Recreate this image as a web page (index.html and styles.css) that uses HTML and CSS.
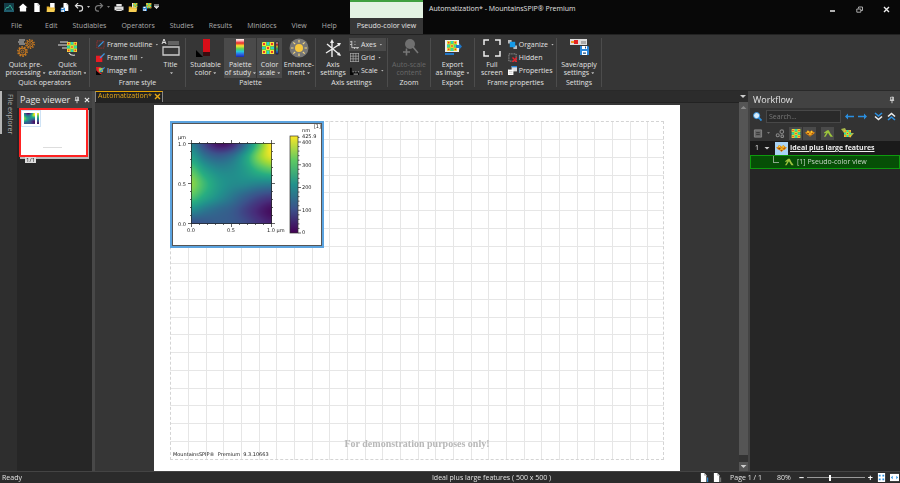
FILE: index.html
```html
<!DOCTYPE html>
<html lang="en">
<head>
<meta charset="utf-8">
<title>Automatization* - MountainsSPIP® Premium</title>
<link rel="stylesheet" href="styles.css">
</head>
<body>
<svg class="defs" aria-hidden="true">
  <defs>
    <linearGradient id="rainbow" x1="0" y1="0" x2="0" y2="1">
      <stop offset="0" stop-color="#fff"/><stop offset=".1" stop-color="#f9b3b3"/><stop offset=".22" stop-color="#e8262c"/><stop offset=".38" stop-color="#f7e431"/><stop offset=".55" stop-color="#55d255"/><stop offset=".7" stop-color="#27c4dc"/><stop offset=".85" stop-color="#2a63e8"/><stop offset="1" stop-color="#1a2ba8"/>
    </linearGradient>
    <linearGradient id="viridis" x1="0" y1="1" x2="0" y2="0">
      <stop offset="0" stop-color="#440154"/><stop offset=".25" stop-color="#3b528b"/><stop offset=".5" stop-color="#21918c"/><stop offset=".75" stop-color="#5ec962"/><stop offset="1" stop-color="#fde725"/>
    </linearGradient>
    <symbol id="map" viewBox="0 0 12 12">
      <rect width="12" height="12" fill="#5fd04a"/>
      <path d="M5 0h2v3H5zM0 5h3v2H0zM9 5h3v2H9zM5 9h2v3H5z" fill="#2fd0c8"/>
      <path d="M1 0h3v4H0V1zM8 0h4v4H8zM0 8h4v4H0zM8 8h4v4H8zM4 4h4v4H4z" fill="#f5e53b"/>
      <path d="M1 1h2v2H1zM9 1h2v2H9zM1 9h2v2H1zM9 9h2v2H9zM5 5h2v2H5z" fill="#ee3a28"/>
    </symbol>
    <symbol id="gear" viewBox="0 0 10 10">
      <circle cx="5" cy="5" r="4.2" fill="none" stroke="#c9791f" stroke-width="1.4" stroke-dasharray="1.4 1.2"/>
      <circle cx="5" cy="5" r="3.1" fill="none" stroke="#c9791f"/><circle cx="5" cy="5" r="1.4" fill="none" stroke="#c9791f" stroke-width=".8"/>
    </symbol>
    <symbol id="doc" viewBox="0 0 8 10"><path d="M1 0h4l2 2.500v7.500H1z" fill="#fff"/><path d="M5 0v2.500h2" fill="none" stroke="#888" stroke-width=".6"/></symbol>
    <symbol id="disk" viewBox="0 0 9 9"><path d="M0 0h8l1 1v8H0z" fill="#2a86d8"/><path d="M2 0h5v3H2zM2 5h5v4H2z" fill="#fff"/><path d="M5 .5h1v2H5zM3 6h3v.6H3zM3 7.300h3v.6H3z" fill="#1b4e86"/></symbol>
    <symbol id="folder" viewBox="0 0 10 10"><path d="M4 0h5v6H4z" fill="#fff"/><path d="M0 4h3l1 1h5v5H0z" fill="#e8b32c"/><path d="M1 6h9l-2 4H0z" fill="#f6ce54"/></symbol>
    <symbol id="surface" viewBox="0 0 12 10"><path d="M0 4l2-1 1-2 2 1 1 1 2-2 2 2 2 1-2 2-2 1-2 2-2-2-2-1z" fill="#dd8a14"/><path d="M3 2l1 0 1 2-2 0zM7 2l1 0 1 2-2 0zM5 5h2v2H5z" fill="#ffd83b"/><path d="M2 5l2-1 1 1-1 1zM8 5l2-1-1 2zM5 7l1-1 1 1-1 1z" fill="#94400e"/></symbol>
    <symbol id="peak" viewBox="0 0 12 10"><path d="M1 4l4-3h2l2 4 3 4H9L7 6 6 4 3 9H1l3-5-2 1z" fill="#9cc43c"/></symbol>
    <symbol id="pin" viewBox="0 0 7 8"><path d="M2 .5h3v3.500H2zM1 4.500h5M3.500 4.500V8" fill="none" stroke="#ddd"/><path d="M4 0h1v4H4z" fill="#ddd"/></symbol>
    <symbol id="cross" viewBox="0 0 7 7"><path d="M1 1l5 5M6 1l-5 5" fill="none" stroke="currentColor" stroke-width="1.400"/></symbol>
    <symbol id="arrow" viewBox="0 0 9 7"><path d="M0 3.500L3 .5v2.200H9v1.600H3v2.200z" fill="#2b8fe0"/></symbol>
  </defs>
</svg>
<div class="app">
  <header class="top">
    <div class="quick" role="toolbar" aria-label="Quick access">
      <svg class="logo" viewBox="0 0 10 9"><rect width="10" height="9" fill="#143e48"/><path d="M1 7l2-3 1 1 2-3 3 5" fill="none" stroke="#31a58e"/><path d="M0 8h10" stroke="#2c7a91"/></svg>
      <button aria-label="Home"><svg viewBox="0 0 10 10"><path d="M5 .5L10 5H8.500v4.500h-7V5H0z" fill="#fff"/></svg></button>
      <button aria-label="New"><svg viewBox="0 0 10 10"><use href="#doc" x="1" width="8" height="10"/></svg></button>
      <button aria-label="Open"><svg viewBox="0 0 10 10"><use href="#folder" width="10" height="10"/></svg></button>
      <button aria-label="Save"><svg viewBox="0 0 10 10"><use href="#doc" x="2" width="8" height="9"/><use href="#disk" x="0" y="5" width="5" height="5"/></svg></button>
      <button aria-label="Undo"><svg viewBox="0 0 10 10"><path d="M4 0L1 3l3 3M1.500 3H6a3 3 0 0 1 0 6H5" fill="none" stroke="#ddd" stroke-width="1.300"/></svg><i class="caret"></i></button>
      <button aria-label="Redo"><svg viewBox="0 0 10 10"><path d="M6 0l3 3-3 3M8.500 3H4a3 3 0 0 0 0 6h1" fill="none" stroke="#777" stroke-width="1.300"/></svg><i class="caret dim"></i></button>
      <button aria-label="Print"><svg viewBox="0 0 10 10"><path d="M2 1h6v3H2zM0 4h10v4H0zM2 7h6v2H2z" fill="#e4e4e4"/><path d="M1 4h8M2 7h6" stroke="#555" stroke-width=".7"/></svg></button>
      <button aria-label="Open studiable"><svg viewBox="0 0 10 10"><use href="#folder" width="10" height="10"/><use href="#map" x="5" width="5" height="5"/></svg></button>
      <button aria-label="Save studiable"><svg viewBox="0 0 10 10"><use href="#map" x="4" width="6" height="6"/><use href="#disk" y="4" width="5" height="5"/></svg></button>
      <button class="more" aria-label="Customize"><svg viewBox="0 0 6 6"><path d="M0 .5h6M0 2h6L3 5z" fill="#ddd" stroke="#ddd"/></svg></button>
    </div>
    <div class="context-band"></div>
    <div class="title-zone">
      <h1>Automatization* - MountainsSPIP® Premium</h1>
      <div class="window-buttons">
        <button aria-label="Minimize"><svg viewBox="0 0 7 7"><path d="M1 5h5" stroke="#ddd" stroke-width="1.600"/></svg></button>
        <button aria-label="Restore"><svg viewBox="0 0 7 7"><path d="M2.500 2.500V1h4v3.500H5M.8 3h4v3.200h-4z" fill="none" stroke="#aaa"/></svg></button>
        <button aria-label="Close"><svg viewBox="0 0 7 7"><use href="#cross" width="7" height="7"/></svg></button>
      </div>
    </div>
    <nav class="menu">
      <a href="#" class="file">File</a><a href="#">Edit</a><a href="#">Studiables</a><a href="#">Operators</a><a href="#">Studies</a><a href="#">Results</a><a href="#">Minidocs</a><a href="#">View</a><a href="#">Help</a>
    </nav>
    <a href="#" class="active-tab">Pseudo-color view</a>
  </header>

  <div class="ribbon">
    <section class="group g-quick">
      <div class="tools">
        <button class="big w41"><svg viewBox="0 0 20 20"><path d="M3 2h6M2 4h6M3 6h6" stroke="#999" stroke-width="1.300"/><use href="#gear" x="9" y="1" width="10" height="10"/><use href="#gear" x="1" y="8" width="11" height="11"/></svg><span>Quick pre-<br>processing<i class="caret"></i></span></button>
        <button class="big w41"><svg viewBox="0 0 20 20"><path d="M2 4h8M0 7h9M4 10h5M11 15q2 3 6 2" stroke="#ddd" fill="none" stroke-width="1.200"/><use href="#map" x="9" y="4" width="10" height="10"/></svg><span>Quick<br>extraction<i class="caret"></i></span></button>
      </div><h2>Quick operators</h2>
    </section>
    <section class="group g-style">
      <div class="tools">
        <div class="stack">
          <button><svg viewBox="0 0 10 10"><path d="M1 1h8v8H1z" fill="none" stroke="#c03030" stroke-dasharray="1 1"/><path d="M2 8l1-2 5-5 1 1-5 5z" fill="#3795e0"/></svg>Frame outline<i class="caret"></i></button>
          <button><svg viewBox="0 0 10 10"><path d="M0 3h7v7H0z" fill="#e81c24"/><path d="M4 5l5-5 1 1-5 5z" fill="#3795e0"/></svg>Frame fill<i class="caret"></i></button>
          <button><svg viewBox="0 0 10 10"><path d="M0 1h6L3 6l4 3H1z" fill="#e81c24"/><path d="M0 5v5h6z" fill="#080808"/><use href="#map" x="3" y="2" width="5" height="5"/><path d="M4 6l5-5 1 1-5 5z" fill="#3795e0"/></svg>Image fill<i class="caret"></i></button>
        </div>
        <button class="big w30"><svg viewBox="0 0 20 20"><path d="M7 4h11M7 6h11" stroke="#aaa" stroke-width=".8"/><path d="M2 9h16v8H2z" fill="none" stroke="#ccc" stroke-width="1.300"/><path d="M1 6l2-5 2 5M2 4.500h2" fill="none" stroke="#ddd" stroke-width="1"/></svg><span>Title<br><i class="caret"></i></span></button>
      </div><h2>Frame style</h2>
    </section>
    <section class="group g-palette">
      <div class="tools">
        <button class="big w36"><svg viewBox="0 0 20 20"><path d="M7 1h7v15H7z" fill="#d80d18"/><path d="M7 14h7v4H7z" fill="#3a0d10"/><path d="M0 12v7h7z" fill="#000"/></svg><span>Studiable<br>color<i class="caret"></i></span></button>
        <button class="big w33 on"><svg viewBox="0 0 20 20"><rect x="6" y="1" width="8" height="18" fill="url(#rainbow)"/></svg><span>Palette<br>of study<i class="caret"></i></span></button>
        <button class="big w25 on"><svg viewBox="0 0 20 20"><use href="#map" x="2" y="4" width="12" height="12"/><rect x="16" y="4" width="2" height="12" fill="url(#rainbow)" stroke="#111" stroke-width=".6"/></svg><span>Color<br>scale<i class="caret"></i></span></button>
        <button class="big w33"><svg viewBox="0 0 20 20"><circle cx="10" cy="10" r="9.500" fill="#777"/><circle cx="10" cy="10" r="4" fill="#f7c83d"/><path d="M10 2v2.500M10 15.500V18M2 10h2.500M15.500 10H18M4.300 4.300l1.900 1.900M13.800 13.800l1.900 1.900M4.300 15.700l1.900-1.900M13.800 6.200l1.900-1.900" stroke="#f3d67c" stroke-width="1.200"/></svg><span>Enhance-<br>ment<i class="caret"></i></span></button>
      </div><h2>Palette</h2>
    </section>
    <section class="group g-axis">
      <div class="tools">
        <button class="big w30"><svg viewBox="0 0 20 20"><path d="M9 19V3M3 15l14-9M4 6l13 11" fill="none" stroke="#eee" stroke-width="1.400"/><path d="M9 1l2 4H7zM18 5l-4 0 2 3.500zM18 18l-4-1 2-3z" fill="#eee"/></svg><span>Axis<br>settings</span></button>
        <div class="stack">
          <button class="on"><svg viewBox="0 0 10 10"><path d="M2 1v7.500h8M0 2h2M0 5h2M5 8v2M8 8v2M5 5h1M5 2h1" stroke="#ccc" fill="none"/></svg>Axes<i class="caret"></i></button>
          <button><svg viewBox="0 0 10 10"><path d="M.5 0v10M3.500 0v10M6.500 0v10M9.500 0v10M0 .5h10M0 3.500h10M0 6.500h10M0 9.500h10" stroke="#aaa" stroke-width=".8"/></svg>Grid<i class="caret"></i></button>
          <button><svg viewBox="0 0 10 10"><path d="M0 2h2v8H0zM2 7h8v3H2z" fill="#050505"/><path d="M3 6.500h1M6 6.500h1M9 6.500h1M4 9h5" stroke="#ccc"/></svg>Scale<i class="caret"></i></button>
        </div>
      </div><h2>Axis settings</h2>
    </section>
    <section class="group g-zoom">
      <div class="tools"><button class="big w41 off" disabled><svg viewBox="0 0 20 20"><circle cx="11" cy="6" r="5" fill="#707070"/><path d="M14 9l5 6M4 14h7M7.500 10.500v7" stroke="#777" stroke-width="1.600"/></svg><span>Auto-scale<br>content</span></button></div><h2>Zoom</h2>
    </section>
    <section class="group g-export">
      <div class="tools"><button class="big w41"><svg viewBox="0 0 20 20"><path d="M2 2h14v12H2z" fill="#eee"/><use href="#map" x="4" y="3" width="10" height="10"/><path d="M13 7h3V5l3 3.500-3 3.500v-2h-3z" fill="#2077c8"/><path d="M2 15h9v2H2z" fill="#2077c8"/></svg><span>Export<br>as image<i class="caret"></i></span></button></div><h2>Export</h2>
    </section>
    <section class="group g-frame">
      <div class="tools">
        <button class="big w30"><svg viewBox="0 0 20 20"><path d="M2 7V2h5M13 2h5v5M18 13v5h-5M7 18H2v-5" fill="none" stroke="#eee" stroke-width="1.500"/></svg><span>Full<br>screen</span></button>
        <div class="stack">
          <button><svg viewBox="0 0 10 10"><path d="M0 0h4v4H0zM6 6h4v4H6z" fill="#bbb"/><path d="M2 2h6v6H2z" fill="#159be8"/></svg>Organize<i class="caret"></i></button>
          <button><svg viewBox="0 0 10 10"><path d="M1 1h8v8H1z" fill="none" stroke="#bbb" stroke-dasharray="1 1"/><path d="M5 5l5 5M10 5l-5 5" stroke="#e8202a" stroke-width="1.600"/></svg>Hidden</button>
          <button><svg viewBox="0 0 10 10"><path d="M4 0h6v6H4z" fill="#ddd"/><path d="M4 0h6v1.500H4z" fill="#2785d4"/><path d="M0 4h6v6H0z" fill="#fff"/><path d="M1 6h4M1 8h4" stroke="#999" stroke-width=".6"/></svg>Properties</button>
        </div>
      </div><h2>Frame properties</h2>
    </section>
    <section class="group g-save">
      <div class="tools"><button class="big w41"><svg viewBox="0 0 20 20"><path d="M1 1h17v6H1z" fill="#ddd"/><path d="M2 3h3v2H2z" fill="#f09a22"/><path d="M5 2h4v4H5z" fill="#e32222"/><path d="M12 3h5v3h-5z" fill="#aaa"/><use href="#disk" x="11" y="8" width="9" height="9"/></svg><span>Save/apply<br>settings<i class="caret"></i></span></button></div><h2>Settings</h2>
    </section>
  </div>

  <div class="work">
    <aside class="rail"><button>File explorer</button></aside>
    <aside class="pages">
      <div class="panel-head"><h2>Page viewer</h2><button aria-label="Pin"><svg viewBox="0 0 7 8"><use href="#pin" width="7" height="8"/></svg></button><button aria-label="Close panel"><svg viewBox="0 0 7 8"><use href="#cross" width="7" height="8"/></svg></button></div>
      <div class="thumb">
        <div class="mini"><canvas width="11" height="11"></canvas><svg viewBox="0 0 2 11"><rect width="2" height="11" fill="url(#viridis)"/></svg></div>
        <hr>
      </div>
      <span class="page-no">1/1</span>
    </aside>
    <main class="document">
      <div class="doc-tabs"><a href="#">Automatization*<svg viewBox="0 0 7 7"><use href="#cross" width="7" height="7"/></svg></a><i class="down"></i></div>
      <div class="doc-view">
        <div class="sheet-wrap">
          <div class="sheet">
            <div class="grid-area">
              <figure class="plot">
                <canvas class="heat" width="81" height="81"></canvas>
                <svg class="axes" viewBox="1 1 150 123">
                  <rect x="119" y="14" width="8" height="97" fill="url(#viridis)" stroke="#333" stroke-width=".7"/>
                  <g id="ticks"></g>
                  <g class="labels">
                    <text x="15" y="17" text-anchor="end">µm</text><text x="15" y="24" text-anchor="end">1.0</text><text x="15" y="64" text-anchor="end">0.5</text><text x="15" y="104" text-anchor="end">0.0</text>
                    <text x="20" y="110" text-anchor="middle">0.0</text><text x="60" y="110" text-anchor="middle">0.5</text><text x="96" y="110">1.0 µm</text>
                    <text x="131" y="10">nm</text><text x="131" y="16">425.9</text><text x="131" y="22">400</text><text x="131" y="45">300</text><text x="131" y="67">200</text><text x="131" y="90">100</text><text x="131" y="112">0</text>
                    <text x="150" y="6" text-anchor="end">[1]</text>
                  </g>
                </svg>
              </figure>
              <p class="watermark">For demonstration purposes only!</p>
              <p class="version">MountainsSPIP®&nbsp; Premium&nbsp; 9.3.10663</p>
            </div>
          </div>
        </div>
        <div class="scrollbar"><i class="up"></i><span></span><i class="down"></i></div>
      </div>
    </main>
    <aside class="workflow">
      <div class="panel-head"><h2>Workflow</h2><button aria-label="Pin"><svg viewBox="0 0 7 8"><use href="#pin" width="7" height="8"/></svg></button></div>
      <div class="search">
        <label for="q" aria-label="Search"><svg viewBox="0 0 10 10"><path d="M6 6l3.500 3.500" stroke="#2b8fe0" stroke-width="2"/><circle cx="4" cy="4" r="3.400" fill="#d7ecfb" stroke="#2b8fe0"/></svg></label>
        <input id="q" type="text" placeholder="Search...">
        <button aria-label="Previous"><svg viewBox="0 0 9 7"><use href="#arrow" width="9" height="7"/></svg></button>
        <button aria-label="Next"><svg class="flip" viewBox="0 0 9 7"><use href="#arrow" width="9" height="7"/></svg></button>
        <button aria-label="Expand all"><svg viewBox="0 0 9 9"><path d="M1 1l3.500 3L8 1" fill="none" stroke="#2b8fe0" stroke-width="1.600"/><path d="M1 4.500l3.500 3 3.500-3" fill="none" stroke="#eee" stroke-width="1.600"/></svg></button>
        <button aria-label="Collapse all"><svg viewBox="0 0 9 9"><path d="M1 4.500l3.500-3 3.500 3" fill="none" stroke="#eee" stroke-width="1.600"/><path d="M1 8l3.500-3L8 8" fill="none" stroke="#2b8fe0" stroke-width="1.600"/></svg></button>
      </div>
      <div class="filters">
        <button aria-label="Layout"><svg viewBox="0 0 10 10"><path d="M1 1h8v8H1z" fill="#666" stroke="#888"/><path d="M3 4h4M3 6h4" stroke="#333"/></svg></button><i class="caret dim"></i>
        <button aria-label="Links"><svg viewBox="0 0 10 10"><g fill="none" stroke="#888" stroke-width="1.200"><circle cx="7" cy="3" r="2"/><circle cx="2.500" cy="7" r="1.700"/><circle cx="7.500" cy="8" r="1.500"/></g></svg></button>
        <button class="on" aria-label="Studiables"><svg viewBox="0 0 10 10"><use href="#map" width="10" height="10"/></svg></button>
        <button class="on" aria-label="Surfaces"><svg viewBox="0 0 12 10"><use href="#surface" width="12" height="10"/></svg></button>
        <button class="on apart" aria-label="Studies"><svg viewBox="0 0 12 10"><use href="#peak" width="12" height="10"/></svg></button>
        <button class="apart wide" aria-label="Sources"><svg viewBox="0 0 13 10"><path d="M0 1l4-1 2 4-3 1zM7 5h6l-4 5z" fill="#a9b94a"/><use href="#map" x="3" y="2" width="7" height="7"/></svg></button>
      </div>
      <div class="node"><span>1</span><i class="down"></i><svg class="badge" viewBox="0 0 12 12"><rect width="12" height="12" fill="#a9d4f7"/><use href="#surface" x="1" y="1" width="10" height="10"/></svg><a href="#">Ideal plus large features</a></div>
      <div class="node child"><i class="elbow"></i><svg viewBox="0 0 12 10"><use href="#peak" width="12" height="10"/></svg><span>[1] Pseudo-color view</span></div>
    </aside>
  </div>

  <footer class="status">
    <span class="ready">Ready</span>
    <span class="info">Ideal plus large features ( 500 x 500 )</span>
    <div class="zoom">
      <svg viewBox="0 0 10 10"><use href="#doc" width="8" height="10"/><path d="M8.500 5v5" stroke="#2b8fe0" stroke-width="1.200"/></svg>
      <svg class="second" viewBox="0 0 10 10"><use href="#doc" width="8" height="10"/><path d="M8.500 5v5" stroke="#888"/></svg>
      <span class="page">Page 1 / 1</span><label for="z">80%</label>
      <b>−</b><input id="z" type="range" min="0" max="100" value="40"><b>+</b>
      <svg viewBox="0 0 10 10"><path d="M1 0h8v10H1z" fill="#fff"/><path d="M2 2h2v2H2zM6 2h2v2H6zM2 6h2v2H2zM6 6h2v2H6z" fill="#2b8fe0"/></svg>
      <svg viewBox="0 0 10 10"><path d="M0 1h10v8H0z" fill="#fff"/><path d="M1 5l2-2v4zM9 5L7 3v4z" fill="#2b8fe0"/></svg>
    </div>
  </footer>
</div>
<script src="app.js"></script>
</body>
</html>
```
FILE: styles.css
```css
* { box-sizing: border-box; }
body { margin: 0; font: 7px/8px "Open Sans", "Noto Sans", sans-serif; color: #e2e2e2; background: #363636; }
h1, h2, p, figure { margin: 0; font: inherit; }
button { display: flex; align-items: center; justify-content: center; padding: 0; border: 0; background: none; color: inherit; font: inherit; }
a { color: inherit; text-decoration: none; }
svg { display: block; flex: none; }
.defs { position: absolute; width: 0; height: 0; }
.app { display: flex; flex-direction: column; height: 100vh; }
.caret { display: inline-block; flex: none; width: 3px; height: 2px; margin-left: 2px; background: #bbb; clip-path: polygon(0 0, 100% 0, 50% 100%); vertical-align: middle; }
.caret.dim { background: #777; }
.down, .up { display: block; flex: none; width: 6px; height: 3px; background: #ccc; clip-path: polygon(0 0, 100% 0, 50% 100%); }
.up { background: #888; clip-path: polygon(50% 0, 100% 100%, 0 100%); }
.on { background: #4a4a4a; }

.top { display: grid; grid-template: 18px 16px / 350px 73px 1fr; background: #080808; }
.quick { display: flex; align-items: center; gap: 4px; padding: 0 0 4px 4px; }
.quick svg { width: 10px; height: 9px; }
.quick .caret { margin-left: 3px; }
.quick .more { margin-left: -2px; }
.quick .more svg { width: 5px; height: 6px; }
.context-band { border-top: 2px solid #3fa03f; background: #e2f2e2; }
.title-zone { display: flex; align-items: center; justify-content: space-between; padding: 0 10px 0 6px; }
.window-buttons { display: flex; gap: 20px; color: #eee; }
.window-buttons svg { width: 7px; height: 7px; }
.menu { display: flex; align-items: center; gap: 15px; padding-left: 11px; color: #ababab; }
.menu .file { padding-right: 8px; }
.active-tab { display: flex; align-items: center; justify-content: center; background: #363636; white-space: nowrap; }

.ribbon { display: flex; flex: none; height: 56px; padding: 3px 0; background: #363636; border-top: 1px solid #222; }
.group { display: flex; flex-direction: column; justify-content: space-between; border-right: 1px solid #4c4c4c; }
.group h2 { text-align: center; white-space: nowrap; }
.tools { display: flex; gap: 1px; }
.g-quick { width: 90px; }
.g-quick .tools { padding-left: 5px; }
.g-style { width: 96px; }
.g-style .tools { padding-left: 5px; gap: 0; }
.g-style .stack { width: 61px; }
.g-palette { width: 130px; }
.g-palette .tools { padding-left: 2px; }
.g-axis { width: 72px; }
.g-axis .tools { padding-left: 2px; }
.g-zoom { width: 43px; }
.g-export { width: 44px; }
.g-frame { width: 82px; }
.g-save { width: 45px; }
.g-frame .tools { padding-left: 2px; gap: 0; }
.g-zoom .tools, .g-export .tools, .g-save .tools { justify-content: center; }
.big { flex-direction: column; justify-content: flex-start; height: 40px; gap: 3px; white-space: nowrap; }
.big svg { width: 20px; height: 20px; }
.off { color: #686868; }
.w41 { width: 41px; }
.w36 { width: 36px; }
.w33 { width: 33px; }
.w30 { width: 30px; }
.w25 { width: 25px; }
.stack { display: flex; flex-direction: column; }
.stack button { justify-content: flex-start; gap: 2px; height: 13px; padding: 0 2px 0 1px; white-space: nowrap; }
.stack svg { width: 9px; height: 9px; }
.stack .caret { margin-left: 1px; }

.work { display: flex; flex: 1; min-height: 0; border-top: 1px solid #292929; }
.rail { flex: none; width: 17px; background: #2e2e2e; }
.rail button { width: 17px; height: 43px; border-left: 2px solid #b5b5b5; color: #aaa; writing-mode: vertical-rl; padding-top: 4px; white-space: nowrap; }
.pages { display: flex; flex-direction: column; align-items: flex-start; flex: none; width: 78px; background: #262626; border-right: 3px solid #484848; }
.panel-head { display: flex; align-items: center; align-self: stretch; gap: 4px; height: 17px; padding: 1px 5px 0 3px; background: #424242; }
.panel-head h2 { flex: 1; font-size: 9px; color: #e4e4e4; white-space: nowrap; }
.panel-head svg { width: 6px; height: 8px; }
.thumb { width: 69px; height: 49px; margin: 0 0 0 2px; border: 2px solid #f22; background: #fff; box-shadow: 1px 2px #bbb; }
.thumb hr { width: 19px; margin: 20px 0 0 22px; border: 0; border-top: 1px solid #ddd; }
.mini { display: flex; align-items: center; justify-content: center; gap: 2px; width: 20px; height: 17px; border: 1px solid #cfe3f5; }
.mini canvas { width: 11px; height: 11px; }
.mini svg { width: 2px; height: 11px; }
.page-no { margin: 0 0 0 8px; padding: 0 1px; background: #ddd; color: #222; font-size: 6px; line-height: 6px; }

.document { display: flex; flex: 1; flex-direction: column; min-width: 0; }
.doc-tabs { display: flex; align-items: center; justify-content: space-between; flex: none; height: 11px; padding-right: 2px; background: #2c2c2c; }
.doc-tabs a { display: flex; align-items: center; gap: 2px; height: 11px; padding: 0 1px 2px 2px; border: 1px solid #888; border-top-color: #e6a400; border-bottom: 0; color: #e6a817; background: #222; }
.doc-tabs svg { width: 7px; height: 7px; }
.doc-view { display: flex; flex: 1; min-height: 0; }
.sheet-wrap { display: flex; flex: 1; min-width: 0; padding: 2px 59px 0; border-top: 1px solid #222; }
.sheet { display: flex; flex: 1; padding: 16px 16px 11px; background: #fff; }
.grid-area { display: flex; flex: 1; flex-direction: column; border: 1px dashed #d4d4d4; background-image: repeating-linear-gradient(90deg, transparent 0 17px, #e6e6e6 17px 18px, transparent 18px 35px, #e6e6e6 35px 36px, transparent 36px 52px, #e6e6e6 52px 53px), repeating-linear-gradient(transparent 0 17px, #e6e6e6 17px 18px, transparent 18px 35px, #e6e6e6 35px 36px, transparent 36px 53px, #e6e6e6 53px 54px, transparent 54px 70px, #e6e6e6 70px 71px); }
.plot { display: grid; width: 154px; height: 127px; margin: -1px; border: 2px solid #5ba3df; background: #fff; box-shadow: inset 0 0 0 1px #555; }
.heat { grid-area: 1 / 1; width: 81px; height: 81px; margin: 20px 0 0 19px; }
.axes { grid-area: 1 / 1; width: 150px; height: 123px; }
.labels { font: 5px "DejaVu Sans", sans-serif; fill: #222; }
.watermark { margin-top: auto; color: #b8b8b8; text-align: center; font: bold 10px/12px "Liberation Serif", serif; }
.version { padding: 1px 0 2px 2px; color: #222; font: 5px/6px "DejaVu Sans", sans-serif; }
.scrollbar { display: flex; flex: none; flex-direction: column; align-items: center; justify-content: space-between; width: 9px; padding: 4px 0 3px; background: #555; }
.scrollbar span { flex: 1; width: 9px; margin: 3px 0; border-bottom: 7px solid #333; }

.workflow { flex: none; width: 152px; background: #262626; border-left: 2px solid #444; }
.search { display: flex; align-items: center; gap: 4px; height: 17px; padding: 0 4px 0 3px; background: #333; }
.search svg { width: 9px; height: 9px; }
.search input { flex: 1; min-width: 0; height: 13px; padding: 0 2px; border: 1px solid #484848; background: #2a2a2a; color: #ccc; font: inherit; }
.search input::placeholder { color: #777; }
.search button:nth-of-type(3) { margin-left: 3px; }
.flip { transform: scaleX(-1); }
.filters { display: flex; align-items: center; gap: 1px; height: 16px; padding-left: 1px; background: #333; }
.filters button { width: 13px; height: 13px; }
.filters svg { width: 10px; height: 9px; }
.filters .caret { margin: 0 2px; }
.filters button:nth-of-type(3) { margin-left: 2px; }
.filters .apart { margin-left: 4px; }
.filters .wide { width: 16px; }
.filters .wide svg { width: 13px; height: 10px; }
.node { display: flex; align-items: center; gap: 5px; height: 14px; padding-left: 5px; background: #1a1a1a; color: #eee; }
.node a { font-weight: bold; text-decoration: underline; margin-left: -3px; }
.node svg { width: 10px; height: 8px; }
.node .badge { width: 13px; height: 13px; }
.child { gap: 3px; padding-left: 22px; border: 1px solid #0e9a0e; background: #064f06; color: #c8d8c8; }
.elbow { align-self: flex-start; width: 6px; height: 7px; margin-right: 2px; border: solid #8aa88a; border-width: 0 0 1px 1px; }

.status { display: grid; grid-template-columns: 1fr auto 1fr; align-items: center; flex: none; height: 12px; padding: 0 1px 0 2px; background: #2b2b2b; border-top: 1px solid #444; }
.info { padding-left: 82px; }
.zoom { display: flex; align-items: center; justify-content: flex-end; gap: 4px; }
.zoom svg { width: 9px; height: 9px; }
.zoom .second { margin-right: 4px; }
.zoom .page { margin-right: 11px; }
.zoom label { margin-right: 4px; }
.zoom b { font-size: 9px; color: #fff; }
.zoom input { width: 58px; height: 7px; margin: 0 -1px; appearance: none; background: linear-gradient(#999, #999) center / 100% 1px no-repeat; }
.zoom input::-webkit-slider-thumb { appearance: none; width: 2px; height: 6px; background: #fff; }
```
FILE: app.js
```js
// Height samples (nm), one row per line from the top of the map down.
const heights = [
  [185, 85, 20, 40, 150, 300, 430],
  [240, 165, 130, 155, 235, 345, 410],
  [310, 240, 200, 200, 230, 280, 310],
  [350, 285, 230, 205, 200, 190, 185],
  [305, 255, 210, 170, 130, 95, 75],
  [205, 170, 145, 125, 85, 45, 15],
  [105, 115, 125, 120, 100, 65, 40]
];
const palette = [[68, 1, 84], [71, 44, 122], [59, 82, 139], [44, 113, 142], [33, 145, 140], [39, 173, 129], [94, 201, 98], [170, 220, 50], [253, 231, 37]];

function spline(p, t) {
  const [a, b, c, d] = p;
  return b + 0.5 * t * (c - a + t * (2 * a - 5 * b + 4 * c - d + t * (3 * (b - c) + d - a)));
}
function sample(values, u) {
  const i = Math.min(Math.floor(u), values.length - 2);
  const at = k => values[Math.max(0, Math.min(values.length - 1, k))];
  return spline([at(i - 1), at(i), at(i + 1), at(i + 2)], u - i);
}
function color(h) {
  const v = Math.max(0, Math.min(0.9999, h / 425.9)) * (palette.length - 1);
  const i = Math.floor(v);
  return palette[i].map((c, k) => c + (palette[i + 1][k] - c) * (v - i));
}
document.querySelectorAll("canvas").forEach(canvas => {
  const n = canvas.width;
  const ctx = canvas.getContext("2d");
  const image = ctx.createImageData(n, n);
  for (let y = 0; y < n; y++) {
    for (let x = 0; x < n; x++) {
      const row = heights.map(r => sample(r, x / (n - 1) * 6));
      image.data.set([...color(sample(row, y / (n - 1) * 6)), 255], (y * n + x) * 4);
    }
  }
  ctx.putImageData(image, 0, 0);
});

// Axis frame and tick marks.
let d = "M20 21.500H101M20 101.500H101M20.500 21V102M100.500 21V102";
for (let i = 0; i <= 10; i++) {
  const p = 20.5 + i * 8, q = 21.5 + i * 8, l = i % 5 ? 1 : 3;
  d += `M${p} ${21 - l}v${l}M${p} 102v${l}M${20 - l} ${q}h${l}M101 ${q}h${l}`;
}
for (let i = 0; i <= 21; i++) {
  d += `M127 ${111 - i * 4.55}h${i % 5 ? 1.5 : 3}`;
}
document.getElementById("ticks").innerHTML = `<path d="${d}" fill="none" stroke="#222" stroke-width=".7"/>`;
```
